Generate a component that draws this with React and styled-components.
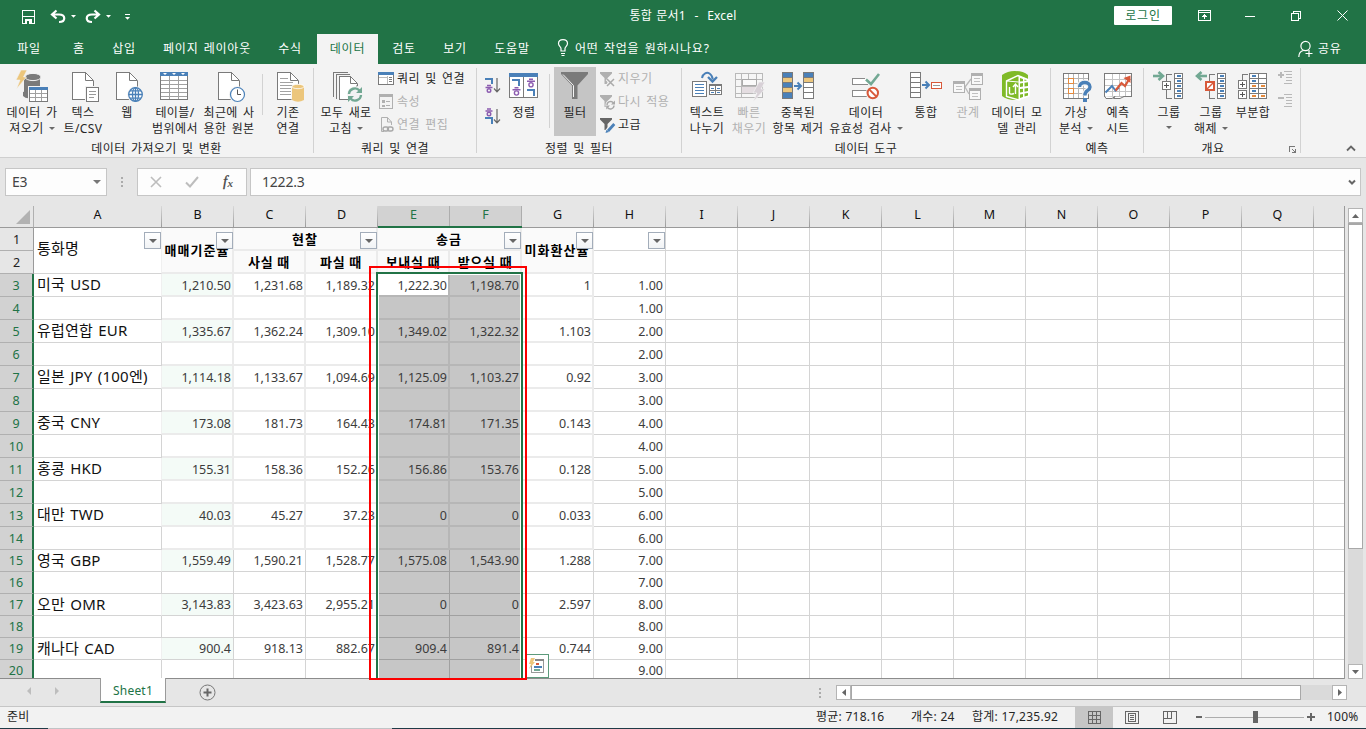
import React from 'react';
import styled, { createGlobalStyle } from 'styled-components';

const UI = '"Noto Sans", "Noto Sans CJK KR", sans-serif';
const GREEN = '#217346';
const GRAY = '#7a7a7a';
const BLUE = '#4a80b8';
const GOLD = '#ecc67c';
const TEAL = '#72a893';
const RED = '#d8593a';
const ORANGE = '#e58a3c';
const PALE = '#b9b9b9';

const Global = createGlobalStyle`
  body { margin: 0; background: #e6e6e6; }
  * { box-sizing: border-box; }
`;

const Window = styled.div`
  width: 1366px;
  height: 729px;
  overflow: hidden;
  display: flex;
  flex-direction: column;
  background: #e6e6e6;
  font-family: ${UI};
  font-size: 12px;
  color: #262626;
  white-space: nowrap;
  & svg { display: block; flex: none; }
`;

/* ---------- title bar ---------- */
const TitleBar = styled.header`
  height: 34px;
  display: grid;
  grid-template-columns: 400px 1fr 400px;
  background: ${GREEN};
  color: #fff;
`;
const QuickTools = styled.div`
  display: flex;
  align-items: flex-start;
  padding: 9px 0 0 21px;
`;
const DocTitle = styled.div`
  text-align: center;
  line-height: 31px;
  word-spacing: 1px;
  letter-spacing: 0.2px;
`;
const WindowTools = styled.div`
  display: flex;
  justify-content: flex-end;
  padding: 6px 1px 0 0;
`;
const LoginButton = styled.button`
  width: 58px;
  height: 19px;
  margin-right: 9px;
  padding: 0;
  border: 0;
  border-radius: 1px;
  background: #fff;
  color: ${GREEN};
  font: 12px/17px ${UI};
  letter-spacing: 0.8px;
`;
const WindowButton = styled.span`
  width: 46px;
  height: 19px;
  display: flex;
  align-items: center;
  justify-content: center;
`;

/* ---------- tabs ---------- */
const TabBar = styled.nav`
  height: 30px;
  display: flex;
  background: ${GREEN};
  color: #fff;
  letter-spacing: 0.75px;
  word-spacing: 1.5px;
  line-height: 29px;
`;
const Tab = styled.div`
  width: ${(p) => p.$w}px;
  margin-left: ${(p) => (p.$active ? 3 : 0)}px;
  text-align: center;
  background: ${(p) => (p.$active ? '#f3f3f3' : 'transparent')};
  color: ${(p) => (p.$active ? GREEN : '#fff')};
`;
const TellMe = styled.div`
  flex: 1;
  display: flex;
  gap: 6px;
  padding-left: 13px;
`;
const Share = styled.div`
  display: flex;
  gap: 5px;
  width: 68px;
`;

/* ---------- ribbon ---------- */
const Ribbon = styled.section`
  height: 94px;
  display: flex;
  background: #f3f3f3;
  border-bottom: 1px solid #cfcfcf;
  letter-spacing: 0.4px;
  word-spacing: 1.8px;
`;
const Group = styled.div`
  width: ${(p) => p.$w}px;
  display: flex;
  flex-direction: column;
`;
const GroupBody = styled.div`
  height: 76px;
  display: flex;
  padding-left: ${(p) => p.$pad || 0}px;
`;
const GroupLabel = styled.div`
  display: flex;
  height: 16px;
  line-height: 17px;
  & > span { flex: 1; text-align: center; }
`;
const Divider = styled.i`
  flex: none;
  width: 1px;
  height: ${(p) => p.$h || 85}px;
  margin: ${(p) => p.$m || '4px 0 0'};
  background: #d2d2d2;
`;
const BigButton = styled.div`
  flex: none;
  width: ${(p) => p.$w}px;
  height: 69px;
  margin-top: 3px;
  padding-top: 3px;
  display: flex;
  flex-direction: column;
  align-items: center;
  background: ${(p) => (p.$on ? '#c5c5c5' : 'transparent')};
  color: ${(p) => (p.$off ? '#b1b1b1' : '#262626')};
`;
const BigLabel = styled.span`
  display: flex;
  align-items: center;
  justify-content: center;
  gap: 5px;
  height: 16px;
  line-height: 16px;
  margin-top: ${(p) => (p.$first ? 1 : 0)}px;
  & i { margin-top: -2px; }
`;
const Caret = styled.i`
  width: 0;
  height: 0;
  border: ${(p) => p.$s || 3}px solid transparent;
  border-bottom: 0;
  border-top-color: ${(p) => p.$c || '#6a6a6a'};
`;
const SmallStack = styled.div`
  display: flex;
  flex-direction: column;
  padding: 3px 0 0 ${(p) => p.$l}px;
`;
const SmallButton = styled.div`
  display: flex;
  align-items: center;
  height: 23px;
  gap: ${(p) => p.$g}px;
  color: ${(p) => (p.$off ? '#b1b1b1' : '#262626')};
  & span { line-height: 22px; height: 22px; }
`;
const SortStack = styled.div`
  display: flex;
  flex-direction: column;
  width: 23px;
  gap: 14px;
  padding-top: 13px;
`;
const DetailStack = styled.div`
  display: flex;
  flex-direction: column;
  gap: 10px;
  padding: 7px 0 0 4px;
`;
const RibbonEnd = styled.div`
  flex: 1;
  display: flex;
  justify-content: flex-end;
  align-items: flex-end;
  padding: 0 10px 5px 0;
`;

/* ---------- formula bar ---------- */
const FormulaBar = styled.section`
  height: 48px;
  display: flex;
  padding: 10px 5px 0;
  color: #444;
  font-size: 14px;
  letter-spacing: -0.2px;
`;
const FieldBox = styled.div`
  width: ${(p) => (p.$w ? `${p.$w}px` : 'auto')};
  flex: ${(p) => (p.$w ? 'none' : 1)};
  height: 28px;
  display: flex;
  align-items: center;
  justify-content: space-between;
  margin-left: ${(p) => p.$ml || 0}px;
  padding: 0 ${(p) => p.$pr || 0}px 0 ${(p) => p.$pl || 0}px;
  border: 1px solid #c6c6c6;
  background: #fdfdfd;
  & > span { height: 27px; line-height: 25px; }
`;
const Dots = styled.span`
  width: ${(p) => p.$w}px;
  height: ${(p) => p.$h}px;
  display: flex;
  flex-direction: column;
  align-items: center;
  justify-content: center;
  gap: 2px;
  &::before, &::after { content: ''; }
  &::before, &::after, & i { width: 2px; height: 2px; background: #ababab; }
`;

/* ---------- sheet ---------- */
const SheetArea = styled.main`
  height: 473px;
  display: flex;
`;
const Sheet = styled.div`
  position: relative;
  width: 1345px;
  height: 473px;
  overflow: hidden;
  display: grid;
  grid-template-columns: 34px 128px repeat(16, 72px) 31px;
  grid-template-rows: 22px repeat(14, 23px) repeat(5, 22px) 18px 1px;
  border-right: 1px solid #9a9a9a;
  background: #fff;
`;
const Corner = styled.div`
  display: flex;
  align-items: flex-end;
  justify-content: flex-end;
  padding: 0 3px 3px 0;
  background: #e6e6e6;
  border-bottom: 1px solid #9a9a9a;
  border-right: 1px solid #b0b0b0;
`;
const CornerMark = styled.i`
  border-left: 14px solid transparent;
  border-bottom: 14px solid #b2b2b2;
`;
const ColHead = styled.div`
  text-align: center;
  padding-right: 1px;
  line-height: 18px;
  font-size: 12.5px;
  color: ${(p) => (p.$on ? GREEN : '#111')};
  background:
    linear-gradient(${(p) => (p.$on ? '#adadad, #adadad' : '#d8d8d8, #9c9c9c')}) right / 1px 100% no-repeat,
    ${(p) => (p.$on ? '#d2d2d2' : '#e6e6e6')};
  border-bottom: ${(p) => (p.$on ? `2px solid ${GREEN}` : '1px solid #9a9a9a')};
`;
const RowHead = styled.div`
  grid-column: 1;
  grid-row: ${(p) => p.$r + 1};
  text-align: center;
  line-height: ${(p) => (p.$r > 14 ? 22 : 24)}px;
  font-size: 12.5px;
  color: ${(p) => (p.$on ? GREEN : '#222')};
  background: ${(p) => (p.$on ? '#d2d2d2' : '#e6e6e6')};
  border-bottom: ${(p) => (p.$last ? 0 : 1)}px solid #b0b0b0;
  border-right: ${(p) => (p.$on ? `2px solid ${GREEN}` : '1px solid #9a9a9a')};
`;
const Cell = styled.div`
  position: relative;
  grid-row: ${(p) => p.$r + 1} / span ${(p) => p.$rs || 1};
  grid-column: ${(p) => p.$c + 1} / span ${(p) => p.$cs || 1};
  min-width: 0;
  border: 0 solid ${(p) => p.$line || '#d4d4d4'};
  border-right-width: ${(p) => p.$bw || 1}px;
  border-bottom-width: ${(p) => (p.$last ? 0 : p.$bw || 1)}px;
  background: ${(p) => p.$bg || '#fff'};
`;
const NameCell = styled(Cell)`
  padding-left: 3px;
  font-size: 15px;
  letter-spacing: 0.2px;
  word-spacing: 1.2px;
  color: #111;
  line-height: ${(p) => (p.$rs ? 41 : 20)}px;
  border-right-color: ${(p) => (p.$open ? '#f0f0f0' : '#d4d4d4')};
`;
const NumberCell = styled(Cell)`
  text-align: right;
  padding-right: ${(p) => 3 - (p.$bw || 1)}px;
  font-size: 12.5px;
  line-height: ${(p) => (p.$r > 14 ? 22 : 24)}px;
  color: #3c3c3c;
`;
const HeadCell = styled(Cell)`
  display: flex;
  justify-content: center;
  font-weight: 700;
  font-size: 13px;
  letter-spacing: ${(p) => (p.$low ? 0.7 : 1)}px;
  color: #000;
  line-height: ${(p) => (p.$rs ? 45 : p.$low ? 22 : 22)}px;
`;
const FilterButton = styled.span`
  position: absolute;
  z-index: 2;
  top: 4px;
  right: ${(p) => p.$right}px;
  width: 17px;
  height: 17px;
  display: flex;
  align-items: center;
  justify-content: center;
  border: 1px solid #a3adba;
  background: linear-gradient(#fff, #f1f3f5);
  & i { border: 4px solid transparent; border-bottom: 0; border-top-color: #666; }
`;
const BottomEdge = styled.div`
  position: relative;
  grid-row: 22;
  grid-column: 1 / -1;
  background: #8c8c8c;
`;
const Selection = styled.div`
  position: absolute;
  left: 376px;
  top: 66px;
  width: 147px;
  height: 420px;
  border: 2px solid ${GREEN};
  box-shadow: inset 0 0 0 1px #fff;
`;
const MarkerBox = styled.div`
  position: absolute;
  z-index: 5;
  left: 369px;
  top: 266px;
  width: 158px;
  height: 414px;
  border: 2px solid #fb0000;
`;
const QuickAnalysis = styled.div`
  position: absolute;
  z-index: 3;
  left: 526px;
  top: 448px;
  width: 23px;
  height: 24px;
  padding: 3px 0 0 1px;
  border: 1px solid #5c9a7b;
  background: #fff;
`;
const VScroll = styled.div`
  width: 15px;
  margin: 2px 0 0 3px;
  display: flex;
  flex-direction: column;
  background: #dadada;
`;
const ScrollButton = styled.span`
  flex: none;
  width: 15px;
  height: 15px;
  display: flex;
  align-items: center;
  justify-content: center;
  border: 1px solid #b4b4b4;
  background: #fff;
`;
const VThumb = styled.i`
  height: 326px;
  border: 1px solid #a8a8a8;
  border-top-width: 2px;
  background: #fff;
  margin-bottom: 115px;
`;

/* ---------- sheet tabs ---------- */
const SheetBar = styled.footer`
  height: 27px;
  display: flex;
`;
const SheetNav = styled.div`
  width: 100px;
  display: flex;
  gap: 23px;
  padding: 8px 0 0 26px;
`;
const SheetTab = styled.div`
  position: relative;
  width: 66px;
  height: 25px;
  margin-top: -1px;
  border: 1px solid #9a9a9a;
  border-top: 0;
  border-bottom: 2px solid ${GREEN};
  background: #fff;
  color: ${GREEN};
  text-align: center;
  line-height: 25px;
  letter-spacing: 0.2px;
`;
const AddSheet = styled.div`
  flex: 1;
  padding: 5px 0 0 33px;
`;
const HScroll = styled.div`
  display: flex;
  width: 511px;
  height: 15px;
  margin: 6px 19px 0 0;
  background: #dadada;
`;
const HThumb = styled.i`
  width: 450px;
  margin-right: 31px;
  border: 1px solid #a8a8a8;
  background: #fff;
`;

/* ---------- status bar ---------- */
const StatusBar = styled.footer`
  height: 22px;
  display: flex;
  border-top: 1px solid #c6c6c6;
  background: #f2f2f2;
  line-height: 20px;
  letter-spacing: 0.25px;
`;
const Ready = styled.div`
  flex: 1;
  padding-left: 7px;
`;
const Stat = styled.span`
  width: ${(p) => p.$w}px;
`;
const ViewButton = styled.span`
  width: 38px;
  display: flex;
  align-items: center;
  justify-content: center;
  background: ${(p) => (p.$on ? '#c6c6c6' : 'transparent')};
`;
const ZoomControl = styled.div`
  width: 138px;
  padding-left: 4px;
`;
const ZoomText = styled.span`
  width: 39px;
`;
const TaskEdge = styled.div`
  height: 1px;
  background: linear-gradient(90deg, #1f3b47 48px, #c0c4c6 48px 392px, #1f3b47 392px);
`;

/* ---------- icons ---------- */
const Svg = ({ w = 34, h = 34, children, smooth }) => (
  <svg width={w} height={h} viewBox={`0 0 ${w} ${h}`} fill="none" shapeRendering={smooth ? 'auto' : 'crispEdges'}>{children}</svg>
);
const Smooth = ({ children, ...p }) => <g shapeRendering="auto" {...p}>{children}</g>;

const Doc = () => (
  <>
    <path d="M6.5 2.5H20.5L27.5 10.5V29.5H6.5Z" fill="#fff" />
    <path d="M19.5 2.5H6.5V29.5H27.5V10.5" stroke={GRAY} />
    <Smooth><path d="M19.5 2.5V10.5H27.5L19.5 2.5Z" fill="#fff" stroke={GRAY} /></Smooth>
  </>
);

const icons = {
  getData: (
    <Svg>
      <rect x="9" y="7" width="16" height="19" fill={GRAY} />
      <Smooth>
        <ellipse cx="18" cy="7" rx="8" ry="3.6" fill={GRAY} stroke="#f3f3f3" strokeWidth="1" />
        <path d="M8 22V26Q11 29 15 28V20Z" fill={GRAY} />
        <path d="M6 0H12L8.5 7H11.5L1.5 19L5 10H1Z" fill={GOLD} stroke="#f3f3f3" strokeWidth=".6" />
      </Smooth>
      <rect x="13" y="16" width="21" height="17" fill="#f3f3f3" />
      <rect x="14.5" y="18.5" width="18" height="13" fill="#fff" stroke={GRAY} />
      <rect x="14" y="17" width="19" height="3" fill={BLUE} />
      <path d="M20.5 20V31M26.5 20V31M15 23.5H32M15 27.5H32" stroke="#a0a0a0" />
    </Svg>
  ),
  textCsv: (
    <Svg>
      <Doc />
      <rect x="19" y="16" width="15" height="17" fill="#f3f3f3" />
      <rect x="20.5" y="17.5" width="12" height="14" fill="#fff" stroke={GRAY} />
      <path d="M23 21.5H30M23 24.5H30M23 27.5H28" stroke="#999" />
    </Svg>
  ),
  web: (
    <Svg>
      <Doc />
      <Smooth stroke={BLUE} strokeWidth="1.3">
        <circle cx="25.5" cy="24.5" r="8.3" fill="#f3f3f3" stroke="none" />
        <circle cx="25.5" cy="24.5" r="6.8" fill="#fff" />
        <ellipse cx="25.5" cy="24.5" rx="3" ry="6.8" />
        <path d="M18.7 24.5H32.3M20 20.8H31M20 28.2H31M25.5 17.7V31.3" />
      </Smooth>
    </Svg>
  ),
  table: (
    <Svg>
      <rect x="2.5" y="3.5" width="27" height="26" fill="#fff" stroke={GRAY} />
      <rect x="2" y="2" width="28" height="4" fill={BLUE} />
      <path d="M11.5 6V29M20.5 6V29M3 10.5H29M3 14.5H29M3 18.5H29M3 22.5H29M3 26.5H29" stroke="#a0a0a0" />
      <Smooth fill="#fff"><path d="M5 3H9L7 5ZM14 3H18L16 5ZM23 3H27L25 5Z" /></Smooth>
    </Svg>
  ),
  recent: (
    <Svg>
      <Doc />
      <Smooth>
        <circle cx="25.5" cy="24.5" r="8.6" fill="#f3f3f3" />
        <circle cx="25.5" cy="24.5" r="7" fill="#fff" stroke={BLUE} strokeWidth="1.2" />
        <path d="M25.5 19.5V24.5H29" stroke="#555" />
      </Smooth>
    </Svg>
  ),
  existing: (
    <Svg>
      <Doc />
      <path d="M9 8.5H17M9 12.5H22M9 15.5H22M9 18.5H20M9 21.5H20M9 24.5H20" stroke="#a2a2a2" />
      <Smooth>
        <path d="M20.5 16V30Q27 34 33.5 30V16Q27 12 20.5 16Z" fill="#f3f3f3" />
        <path d="M21 17V30Q27 33.5 33 30V17Z" fill={GOLD} />
        <ellipse cx="27" cy="16.5" rx="6" ry="2.2" fill={GOLD} stroke="#fff" strokeWidth=".8" />
      </Smooth>
    </Svg>
  ),
  refreshAll: (
    <Svg>
      <path d="M4.5 27V2.5H19M7.5 29V4.5H21" stroke={GRAY} />
      <path d="M10.5 6.5H22L28.5 13.5V29.5H10.5Z" fill="#fff" />
      <path d="M21.5 6.5H10.5V29.5H28" stroke={GRAY} />
      <Smooth><path d="M21.5 6.5L28.5 13.5V16H27M21.5 6.5V13.5H28" stroke={GRAY} /></Smooth>
      <Smooth>
        <circle cx="26" cy="24.5" r="8" fill="#f3f3f3" />
        <path d="M20 24A6 6 0 0 1 30.5 20.5M32 25A6 6 0 0 1 21.5 28.5" stroke={TEAL} strokeWidth="2.4" />
        <path d="M33 17V23H27ZM19 32V26H25Z" fill={TEAL} />
      </Smooth>
    </Svg>
  ),
  sort: (
    <Svg>
      <rect x="2.5" y="4.5" width="28" height="23" fill="#fff" stroke={GRAY} />
      <rect x="2" y="3" width="29" height="4" fill={BLUE} />
      <path d="M16.5 7V28" stroke={GRAY} />
      <path d="M5 10H13M12 10V16M20 20H28M27 20V26" stroke={BLUE} strokeWidth="2" />
      <Smooth stroke="#8c5cb0" strokeWidth="1.4">
        <path d="M7.5 17.7H11.5M5.5 19.7H13.5" /><circle cx="9.5" cy="23" r="2.1" />
        <path d="M22 9.300H26M20 11.300H28" /><circle cx="24" cy="14.800" r="2.100" />
      </Smooth>
    </Svg>
  ),
  filter: (
    <Svg>
      <Smooth>
        <path d="M3 2H30V4L19.5 15.5V29H14V15.5L3 4Z" fill={GRAY} />
        <path d="M5 4.5L15.5 15.5V27" stroke="#f4f4f4" strokeWidth="1" />
      </Smooth>
    </Svg>
  ),
  textSplit: (
    <Svg>
      <rect x="2.5" y="11.5" width="14" height="15" fill="#fff" stroke={GRAY} />
      <path d="M5 14.5H14M5 17.5H14M5 20.5H14M5 23.5H14" stroke={BLUE} />
      <rect x="19.5" y="14.5" width="12" height="10" fill="#fff" stroke={GRAY} />
      <path d="M19 15.5H32M25.5 14V25M20 20.5H31" stroke={GRAY} />
      <path d="M21 18.5H24M27 18.5H30M21 22.5H24M27 22.5H30" stroke={BLUE} />
      <Smooth>
        <path d="M12 8C13 3 17 2 19.5 3.5C22 5 22.5 7 22.8 9.5" stroke={BLUE} strokeWidth="2" />
        <path d="M18 7L22.5 11.5L27 7" stroke={BLUE} strokeWidth="2.3" />
      </Smooth>
    </Svg>
  ),
  flashFill: (
    <Svg>
      <rect x="3.5" y="3.5" width="27" height="24" fill="#f6f6f6" stroke={PALE} />
      <rect x="10" y="17" width="14" height="7" fill="#e4dde1" />
      <path d="M4 9.5H30M4 16.5H30M4 23.5H24M9.5 4V27M16.5 4V9M24.5 4V16" stroke={PALE} />
      <rect x="10.5" y="9.5" width="14" height="6" fill="#fafafa" stroke="#aaa" />
      <Smooth><path d="M27 12H33L29 19H33L21 32L25 23H21Z" fill="#d8d1d7" stroke="#f3f3f3" strokeWidth=".7" /></Smooth>
    </Svg>
  ),
  dedupe: (
    <Svg>
      <rect x="1.5" y="2.5" width="10" height="26" fill={BLUE} />
      <path d="M2 8H11V13H2ZM2 18H11V23H2Z" fill={GOLD} />
      <path d="M1.5 2.5H11.5V28.5H1.5ZM2 7.5H11M2 12.5H11M2 17.5H11M2 22.5H11" stroke={GRAY} />
      <rect x="22.5" y="2.5" width="10" height="26" fill="#fff" />
      <path d="M23 3H32V8H23Z" fill={BLUE} />
      <path d="M23 8H32V13H23Z" fill={GOLD} />
      <path d="M22.5 2.5H32.5V28.5H22.5ZM23 7.5H32M23 12.5H32M23 17.5H32M23 22.5H32" stroke={GRAY} />
      <Smooth><path d="M13 16H19" stroke={BLUE} strokeWidth="2" /><path d="M16.5 12.5L20 16L16.5 19.5" stroke={BLUE} strokeWidth="2" /></Smooth>
    </Svg>
  ),
  validate: (
    <Svg>
      <path d="M16 8.5H3.5V14.5H19M18 20.5H3.5V26.5H18" fill="#fff" stroke="#8a8a8a" />
      <Smooth>
        <path d="M17 9.5L22 14L30 4" stroke={TEAL} strokeWidth="2.6" />
        <circle cx="23.8" cy="23" r="7" fill="#f3f3f3" />
        <circle cx="23.8" cy="23" r="5.2" fill="#fff" stroke={RED} strokeWidth="2" />
        <path d="M20.2 19.4L27.4 26.6" stroke={RED} strokeWidth="2" />
      </Smooth>
    </Svg>
  ),
  consolidate: (
    <Svg>
      <rect x="1.5" y="2.5" width="10" height="25" fill="#fff" stroke={GRAY} />
      <path d="M2 7.5H11M2 12.5H11M2 17.5H11M2 22.5H11" stroke={GRAY} />
      <Smooth><path d="M13 15H19" stroke={BLUE} strokeWidth="2" /><path d="M16.5 11.5L20 15L16.5 18.5" stroke={BLUE} strokeWidth="2" /></Smooth>
      <rect x="22.5" y="12.5" width="10" height="6" fill="#fff" stroke={RED} />
      <path d="M24 15.5H31" stroke="#999" />
    </Svg>
  ),
  relations: (
    <Svg>
      <Smooth><path d="M14 17L20 9M14 17L18 24" stroke={PALE} strokeWidth="1.3" /></Smooth>
      {[[2, 11], [20, 3], [18, 18]].map(([x, y]) => (
        <g key={x}>
          <rect x={x + 0.5} y={y + 0.5} width="11" height="11" fill="#f8f8f8" stroke="#b0b0b0" />
          <rect x={x} y={y} width="12" height="3" fill="#b0b0b0" />
          <path d={`M${x + 3} ${y + 5.5}H${x + 9}M${x + 3} ${y + 8.5}H${x + 9}`} stroke="#c0c0c0" />
        </g>
      ))}
    </Svg>
  ),
  model: (
    <Svg smooth>
      <path d="M2 5Q8 0.8 15 1Q23 1 28 5V26Q22 30.5 15 30Q7 30 2 26Z" fill="#7fba27" />
      <path d="M6.5 11L18 5.5L29 10V26L19 30L6.5 26.5Z" fill="#7fba27" stroke="#fff" strokeWidth="1.4" />
      <path d="M18.5 5.5V30L29.5 26V10Z" fill="#fff" />
      <path d="M7 11L18.5 12L29 10.5" stroke="#fff" />
      <path d="M20 13.5L23 13V16.5L20 17ZM24.5 12.7L28 12.2V16L24.5 16.4ZM20 19L23 18.7V22L20 22.5ZM24.5 18.4L28 18V21L24.5 21.7ZM20 24.5L23 24V27L20 28ZM24.5 23.5L28 23V25.5L24.5 26.6ZM20 8L23 9V11.3L20 11.6ZM24.5 9.4L27 10.2L24.5 10.9Z" fill="#7fba27" />
      <path d="M9.5 17V23Q10 25 14 23.5M15.5 24V16L15 14M13 17L15.5 14L18 17" stroke="#fff" strokeWidth="1.4" />
    </Svg>
  ),
  whatIf: (
    <Svg>
      <rect x="4.5" y="3.5" width="25" height="25" fill="#fff" stroke={GRAY} />
      <path d="M9.5 4V28M14.5 4V28M19.5 4V28M24.5 4V28M5 8.5H29M5 13.5H29M5 18.5H29M5 23.5H29" stroke="#b5b5b5" />
      <path d="M9.5 8.5H14.5V13.5H9.5ZM9.5 18.5H14.5V23.5H9.5Z" fill="#fff" stroke={ORANGE} strokeWidth="1.4" />
      <Smooth>
        <path d="M20.5 17C20.5 11 31 11 31 17C31 21 25.8 20 25.8 26" stroke="#f3f3f3" strokeWidth="6" />
        <path d="M20.5 17C20.5 11 31 11 31 17C31 21 25.8 20 25.8 25.5" stroke={BLUE} strokeWidth="3.4" />
        <rect x="24" y="28" width="4" height="4" fill={BLUE} />
      </Smooth>
    </Svg>
  ),
  forecast: (
    <Svg>
      <rect x="3.5" y="3.5" width="27" height="23" fill="#fff" stroke={GRAY} />
      <path d="M4 9.5H30M4 15.5H30M4 21.5H30M11.5 4V26M18.5 4V26M24.5 4V26" stroke="#c4c4c4" />
      <Smooth>
        <path d="M3.5 26L5 28.5H11L14 26.5M14 26.5L12.5 28.5H19L23 26.5" fill="#fff" stroke={GRAY} />
        <path d="M4.5 22.5L11 16L14.5 20.5L18 17.5" stroke={BLUE} strokeWidth="2" />
        <path d="M14.5 20.5L20.5 13L24 16L28.5 8.5" stroke={RED} strokeWidth="2.2" />
        <path d="M22.5 8L29.500 5.500V13Z" fill={RED} />
      </Smooth>
    </Svg>
  ),
  group: (
    <Svg>
      <Smooth><path d="M1 6H10" stroke={TEAL} strokeWidth="2.6" /><path d="M6.5 2L11 6L6.5 10" stroke={TEAL} strokeWidth="2.6" /></Smooth>
      <path d="M14.5 11V4.5H20M14.5 20V28.5H20" stroke={GRAY} />
      <rect x="10.5" y="11.5" width="8" height="8" fill="#fff" stroke={GRAY} />
      <path d="M12 15.5H17M14.5 13V18" stroke="#555" />
      <rect x="22.5" y="3.5" width="8" height="25" fill="#fff" stroke={GRAY} />
      <path d="M23 8.5H30M23 13.5H30M23 18.5H30M23 23.5H30" stroke={GRAY} />
      <path d="M25 6H29M25 11H29M25 16H29M25 21H29M25 26H29" stroke={BLUE} strokeWidth="1.4" />
    </Svg>
  ),
  ungroup: (
    <Svg>
      <Smooth><path d="M4 6H13" stroke={TEAL} strokeWidth="2.6" /><path d="M7.5 2L3 6L7.5 10" stroke={TEAL} strokeWidth="2.6" /></Smooth>
      <path d="M15.5 11V4.5H21M15.5 20V28.5H21" stroke={GRAY} />
      <rect x="12" y="12" width="8" height="8" fill="#fff" stroke={RED} strokeWidth="1.6" />
      <Smooth><path d="M12.5 19.5L19.5 12.5" stroke={RED} strokeWidth="1.4" /></Smooth>
      <rect x="23.5" y="3.5" width="8" height="25" fill="#fff" stroke={GRAY} />
      <path d="M24 8.5H31M24 13.5H31M24 18.5H31M24 23.5H31" stroke={GRAY} />
      <path d="M26 6H30M26 11H30M26 16H30M26 21H30M26 26H30" stroke={BLUE} strokeWidth="1.4" />
    </Svg>
  ),
  subtotal: (
    <Svg>
      <path d="M6.5 10V4.5H12" stroke={GRAY} />
      <rect x="2.5" y="10.5" width="8" height="8" fill="#fff" stroke={GRAY} />
      <rect x="2.5" y="20.5" width="8" height="8" fill="#fff" stroke={GRAY} />
      <path d="M4 14.5H9M6.5 12V17M4 24.5H9M6.5 22V27" stroke="#555" />
      <rect x="13.5" y="3.5" width="17" height="25" fill="#fff" stroke={GRAY} />
      <path d="M14 8.5H30M14 13.5H30M14 18.5H30M14 23.5H30M22.5 4V28" stroke={GRAY} />
      <path d="M16 6H20M16 11H20M16 21H20" stroke={BLUE} strokeWidth="1.4" />
      <path d="M16 16H20M25 16H29M16 26H20M25 26H29" stroke={ORANGE} strokeWidth="1.4" />
    </Svg>
  ),
};

const SortMini = ({ desc }) => (
  <Svg w={16} h={17}>
    <path d={desc ? 'M0 10H8M7 10V16' : 'M0 2H8M7 2V7'} stroke={BLUE} strokeWidth="2" />
    <Smooth stroke="#8c5cb0" strokeWidth="1.400" transform={desc ? 'translate(0 0)' : 'translate(0 7.500)'}>
      <path d="M2 1H6M0.500 3H7.500" /><circle cx="4" cy="6" r="1.800" />
    </Smooth>
    <Smooth stroke="#666" strokeWidth="1.200"><path d="M12 1V15M9 11.500L12 14.800L15 11.500" /></Smooth>
  </Svg>
);

const small = {
  queries: (
    <Svg w={16} h={16}>
      <rect x=".5" y="1.5" width="15" height="12" fill="#fff" stroke={GRAY} />
      <rect x="0" y="1" width="16" height="3" fill={BLUE} />
      <path d="M9.5 5V13M1 6.5H9" stroke="#bbb" /><path d="M11 6.5H14M11 8.5H14M11 10.5H14" stroke={GRAY} />
    </Svg>
  ),
  props: (
    <Svg w={16} h={16}>
      <path d="M1.500 .5H14.500V14.500H1.500Z" stroke="#b0b0b0" /><path d="M1 1.500H15" stroke="#b0b0b0" strokeWidth="3" />
      <path d="M4 6H6.500V8.500H4ZM4 10.500H6.500V13H4Z" fill="#b0b0b0" /><path d="M8 7.500H12M8 11.500H12" stroke="#b0b0b0" />
    </Svg>
  ),
  edit: (
    <Svg w={16} h={16} smooth>
      <path d="M6 14.500H3.500V.5H9.500L13.500 5V8M9.500 .5V5H13.500" stroke="#b0b0b0" />
      <rect x="5" y="10" width="5.500" height="4" rx="2" stroke="#a8a8a8" strokeWidth="1.400" />
      <rect x="9.500" y="10" width="5.500" height="4" rx="2" stroke="#a8a8a8" strokeWidth="1.400" />
    </Svg>
  ),
  clear: (
    <Svg w={16} h={16} smooth>
      <path d="M0 1H12V2.5L7.5 7V13H4.5V7L0 2.5Z" fill="#b0b0b0" />
      <path d="M7 8L14 15M14 8L7 15" stroke="#f3f3f3" strokeWidth="3.5" /><path d="M7 8L14 15M14 8L7 15" stroke="#aaa" strokeWidth="1.5" />
    </Svg>
  ),
  reapply: (
    <Svg w={16} h={16} smooth>
      <path d="M0 1H12V2.5L7.5 7V13H4.5V7L0 2.5Z" fill="#b0b0b0" />
      <circle cx="10.5" cy="11" r="5" fill="#f3f3f3" />
      <path d="M7 11A3.6 3.6 0 0 1 13.5 9M14 11.5A3.6 3.6 0 0 1 7.5 13.5" stroke="#a8a8a8" strokeWidth="1.4" />
      <path d="M15 6.5V10.5H11ZM6.2 15.5V11.5H10Z" fill="#a8a8a8" />
    </Svg>
  ),
  advanced: (
    <Svg w={16} h={16} smooth>
      <path d="M0 1H12V2.5L7.5 7V13H4.5V7L0 2.5Z" fill="#666" />
      <path d="M7 15L14 7" stroke="#f3f3f3" strokeWidth="5" />
      <path d="M8 14L14.3 7" stroke={BLUE} strokeWidth="2.8" /><path d="M5.5 16L6.5 12.8L9 15Z" fill={BLUE} />
    </Svg>
  ),
};

const Big = ({ w, icon, lines, off, on, menu }) => (
  <BigButton $w={w} $off={off} $on={on}>
    {icons[icon]}
    {lines.map((t, i) => (
      <BigLabel key={i} $first={i === 0}>
        {t}
        {menu && i === lines.length - 1 && <Caret />}
      </BigLabel>
    ))}
  </BigButton>
);

const SmallItem = ({ icon, text, off, gap }) => (
  <SmallButton $off={off} $g={gap}>{small[icon]}<span>{text}</span></SmallButton>
);

/* ---------- data ---------- */
const tabs = [['파일', 58], ['홈', 42], ['삽입', 48], ['페이지 레이아웃', 118], ['수식', 48], ['데이터', 61, true], ['검토', 52], ['보기', 50], ['도움말', 64]];
const letters = 'ABCDEFGHIJKLMNOPQ'.split('');
const rates = {
  3: ['미국 USD', '1,210.50', '1,231.68', '1,189.32', '1,222.30', '1,198.70', '1'],
  5: ['유럽연합 EUR', '1,335.67', '1,362.24', '1,309.10', '1,349.02', '1,322.32', '1.103'],
  7: ['일본 JPY (100엔)', '1,114.18', '1,133.67', '1,094.69', '1,125.09', '1,103.27', '0.92'],
  9: ['중국 CNY', '173.08', '181.73', '164.43', '174.81', '171.35', '0.143'],
  11: ['홍콩 HKD', '155.31', '158.36', '152.26', '156.86', '153.76', '0.128'],
  13: ['대만 TWD', '40.03', '45.27', '37.23', '0', '0', '0.033'],
  15: ['영국 GBP', '1,559.49', '1,590.21', '1,528.77', '1,575.08', '1,543.90', '1.288'],
  17: ['오만 OMR', '3,143.83', '3,423.63', '2,955.21', '0', '0', '2.597'],
  19: ['캐나다 CAD', '900.4', '918.13', '882.67', '909.4', '891.4', '0.744'],
};
const rows = Array.from({ length: 20 }, (_, i) => i + 1);
const LIGHT = '#ebebeb';

const Filter = ({ right = 0 }) => <FilterButton $right={right}><i /></FilterButton>;

function DataRow({ r }) {
  const data = rates[r] || [];
  const last = r === 20;
  const thick = r <= 14;
  return (
    <>
      <NameCell $r={r} $c={1} $last={last} $open={r % 2 === 1}>{data[0]}</NameCell>
      {[2, 3, 4, 5, 6, 7].map((c) => {
        const sel = c === 5 || c === 6;
        const active = r === 3 && c === 5;
        const bg = active ? '#fff' : sel ? '#c6c6c6' : c === 2 && r % 2 === 1 ? '#f4fbf7' : '#fff';
        const line = sel ? (thick ? '#b6b6b6' : '#a0a0a0') : thick ? LIGHT : '#d4d4d4';
        return (
          <NumberCell key={c} $r={r} $c={c} $bw={thick ? 2 : 1} $line={line} $bg={bg} $last={last}>
            {data[c - 1]}
          </NumberCell>
        );
      })}
      <NumberCell $r={r} $c={8} $last={last}>{`${Math.floor((r - 1) / 2)}.00`}</NumberCell>
    </>
  );
}

function App() {
  return (
    <>
      <Global />
      <Window>
        <TitleBar>
          <QuickTools>
            <Svg w={120} h={16}>
              <path d="M1.5 1.5H13.5V14.5H1.5Z" stroke="#fff" strokeWidth="1.6" />
              <path d="M2 7.5H13" stroke="#fff" strokeWidth="1.6" />
              <path d="M4 10H11V15H4Z" fill="#fff" /><rect x="6" y="12" width="2" height="3" fill={GREEN} />
              <Smooth stroke="#fff" strokeWidth="2.2">
                <path d="M35.5 1.5L31 5.5L35.5 9.5M31 5.5H38C45 5.5 45 13 38 13" />
                <path d="M73.5 1.5L78 5.5L73.5 9.5M78 5.5H71C64 5.5 64 13 71 13" />
              </Smooth>
              <Smooth fill="#fff"><path d="M50 6H55L52.5 8.8ZM85 6H90L87.5 8.8ZM104 8H109L106.5 10.8Z" /></Smooth>
              <path d="M104 5.5H109" stroke="#fff" />
            </Svg>
          </QuickTools>
          <DocTitle>{'통합 문서1 \u00a0- \u00a0Excel'}</DocTitle>
          <WindowTools>
            <LoginButton>로그인</LoginButton>
            <WindowButton>
              <Svg w={13} h={11}><path d="M.5 .5H12.5V10.5H.5ZM0 2.5H13M6.5 4V9M4 6.5H9M5 5.5H8" stroke="#fff" /></Svg>
            </WindowButton>
            <WindowButton><Svg w={10} h={10}><path d="M0 5.5H10" stroke="#fff" /></Svg></WindowButton>
            <WindowButton><Svg w={10} h={10}><path d="M.5 2.5H7.5V9.5H.5ZM2.5 2V.5H9.5V7.5H8" stroke="#fff" /></Svg></WindowButton>
            <WindowButton><Svg w={11} h={11} smooth><path d="M.5 .5L10.5 10.5M10.5 .5L.5 10.5" stroke="#fff" /></Svg></WindowButton>
          </WindowTools>
        </TitleBar>

        <TabBar>
          {tabs.map(([t, w, on]) => <Tab key={t} $w={w} $active={on}>{t}</Tab>)}
          <TellMe>
            <Svg w={12} h={24} smooth>
              <path d="M4 17V14.5C4 13 1.500 12 1.500 9.500C1.500 4.200 10.500 4.200 10.500 9.500C10.500 12 8 13 8 14.500V17ZM4 19.500H8M4.500 21.500H7.500" stroke="#fff" strokeWidth="1.200" />
            </Svg>
            어떤 작업을 원하시나요?
          </TellMe>
          <Share>
            <Svg w={15} h={24} smooth>
              <path d="M.8 23C.8 19 3 17 5.500 16.500" stroke="#fff" strokeWidth="1.200" />
              <circle cx="7.500" cy="12" r="4.600" stroke="#fff" strokeWidth="1.200" />
              <path d="M7.500 19.500H14.500M11 16V23" stroke="#fff" strokeWidth="1.200" />
            </Svg>
            공유
          </Share>
        </TabBar>

        <Ribbon>
          <Group $w={313}>
            <GroupBody $pad={2}>
              <Big w={60} icon="getData" lines={['데이터 가', '져오기']} menu />
              <Big w={42} icon="textCsv" lines={['텍스', '트/CSV']} />
              <Big w={46} icon="web" lines={['웹']} />
              <Big w={50} icon="table" lines={['테이블/', '범위에서']} />
              <Big w={58} icon="recent" lines={['최근에 사', '용한 원본']} />
              <Divider $h={41} $m="10px 1px 0 4px" />
              <Big w={48} icon="existing" lines={['기존', '연결']} />
            </GroupBody>
            <GroupLabel><span>데이터 가져오기 및 변환</span></GroupLabel>
          </Group>
          <Divider />
          <Group $w={162}>
            <GroupBody $pad={2}>
              <Big w={60} icon="refreshAll" lines={['모두 새로', '고침']} menu />
              <SmallStack $l={2}>
                <SmallItem icon="queries" text="쿼리 및 연결" gap={3} />
                <SmallItem icon="props" text="속성" off gap={3} />
                <SmallItem icon="edit" text="연결 편집" off gap={3} />
              </SmallStack>
            </GroupBody>
            <GroupLabel><span>쿼리 및 연결</span></GroupLabel>
          </Group>
          <Divider />
          <Group $w={204}>
            <GroupBody $pad={8}>
              <SortStack><SortMini /><SortMini desc /></SortStack>
              <Big w={32} icon="sort" lines={['정렬']} />
              <Divider $h={54} $m="10px 4px 0 9px" />
              <Big w={42} icon="filter" lines={['필터']} on />
              <SmallStack $l={4}>
                <SmallItem icon="clear" text="지우기" off gap={2} />
                <SmallItem icon="reapply" text="다시 적용" off gap={2} />
                <SmallItem icon="advanced" text="고급" gap={2} />
              </SmallStack>
            </GroupBody>
            <GroupLabel><span>정렬 및 필터</span></GroupLabel>
          </Group>
          <Divider />
          <Group $w={368}>
            <GroupBody $pad={4}>
              <Big w={42} icon="textSplit" lines={['텍스트', '나누기']} />
              <Big w={42} icon="flashFill" lines={['빠른', '채우기']} off />
              <Big w={56} icon="dedupe" lines={['중복된', '항목 제거']} />
              <Big w={80} icon="validate" lines={['데이터', '유효성 검사']} menu />
              <Big w={40} icon="consolidate" lines={['통합']} />
              <Big w={44} icon="relations" lines={['관계']} off />
              <Big w={54} icon="model" lines={['데이터 모', '델 관리']} />
            </GroupBody>
            <GroupLabel><span>데이터 도구</span></GroupLabel>
          </Group>
          <Divider />
          <Group $w={92}>
            <GroupBody $pad={4}>
              <Big w={42} icon="whatIf" lines={['가상', '분석']} menu />
              <Big w={42} icon="forecast" lines={['예측', '시트']} />
            </GroupBody>
            <GroupLabel><span>예측</span></GroupLabel>
          </Group>
          <Divider />
          <Group $w={156}>
            <GroupBody $pad={4}>
              <Big w={42} icon="group" lines={['그룹', '']} menu />
              <Big w={42} icon="ungroup" lines={['그룹', '해제']} menu />
              <Big w={42} icon="subtotal" lines={['부분합']} />
              <DetailStack>
                <Svg w={14} h={13}><path d="M6 .5H14M8 3.5H14M8 6.5H14M8 9.5H14M6 12.5H14" stroke={PALE} /><path d="M0 4H6M3 1V7" stroke={PALE} strokeWidth="2" /></Svg>
                <Svg w={14} h={13}><path d="M6 .5H14M8 3.5H14M8 6.5H14M8 9.5H14M6 12.5H14" stroke={PALE} /><path d="M0 4H6" stroke={PALE} strokeWidth="2" /></Svg>
              </DetailStack>
            </GroupBody>
            <GroupLabel>
              <span>개요</span>
              <Svg w={18} h={16}><path d="M7.5 12V6.5H13M10 9L13 12M13.5 9V12.5H10" stroke="#777" /></Svg>
            </GroupLabel>
          </Group>
          <Divider />
          <RibbonEnd><Svg w={10} h={7} smooth><path d="M1 5.500L5 1.500L9 5.500" stroke="#666" strokeWidth="1.800" /></Svg></RibbonEnd>
        </Ribbon>

        <FormulaBar>
          <FieldBox $w={102} $pl={6} $pr={5}><span>E3</span><Caret $s={4} $c="#777" /></FieldBox>
          <Dots $w={30} $h={28}><i /></Dots>
          <FieldBox $w={110} $pl={12} $pr={11}>
            <Svg w={12} h={12} smooth><path d="M1 1L11 11M11 1L1 11" stroke="#bdbdbd" strokeWidth="1.600" /></Svg>
            <Svg w={14} h={12} smooth><path d="M1 6.500L5 10.500L13 1" stroke="#bdbdbd" strokeWidth="2" /></Svg>
            <Svg w={14} h={16} smooth>
              <text x="2" y="12" fontFamily="Liberation Serif, serif" fontStyle="italic" fontSize="15" fill="#444" stroke="#444" strokeWidth=".3">f</text>
              <text x="6.5" y="13" fontFamily="Liberation Serif, serif" fontStyle="italic" fontWeight="700" fontSize="11" fill="#555">x</text>
            </Svg>
          </FieldBox>
          <FieldBox $ml={3} $pl={11} $pr={4}>
            <span>1222.3</span>
            <Svg w={8} h={7} smooth><path d="M1 1.500L4 4.500L7 1.500" stroke="#666" strokeWidth="2" /></Svg>
          </FieldBox>
        </FormulaBar>

        <SheetArea>
          <Sheet>
            <Corner><CornerMark /></Corner>
            {letters.map((l) => <ColHead key={l} $on={l === 'E' || l === 'F'}>{l}</ColHead>)}
            <ColHead />
            {rows.map((r) => <RowHead key={r} $r={r} $on={r > 2} $last={r === 20}>{r}</RowHead>)}

            <NameCell $r={1} $c={1} $rs={2} $open>통화명<Filter /></NameCell>
            <HeadCell $r={1} $c={2} $rs={2} $bw={2} $line={LIGHT} $bg="#fafafa">매매기준율<Filter right={-1} /></HeadCell>
            <HeadCell $r={1} $c={3} $cs={2} $bw={2} $line={LIGHT} $bg="#fafafa">현찰<Filter right={-1} /></HeadCell>
            <HeadCell $r={1} $c={5} $cs={2} $bw={2} $line={LIGHT} $bg="#fafafa">송금<Filter right={-1} /></HeadCell>
            <HeadCell $r={1} $c={7} $rs={2} $bw={2} $line={LIGHT} $bg="#fafafa">미화환산율<Filter right={-1} /></HeadCell>
            {['사실 때', '파실 때', '보내실 때', '받으실 때'].map((t, i) => (
              <HeadCell key={t} $r={2} $c={3 + i} $bw={2} $line={LIGHT} $bg="#fafafa" $low>{t}</HeadCell>
            ))}
            <Cell $r={1} $c={8}><Filter /></Cell>
            <Cell $r={2} $c={8} />
            {rows.slice(2).map((r) => <DataRow key={r} r={r} />)}
            {rows.map((r) => Array.from({ length: 10 }, (_, i) => <Cell key={`${r}-${i}`} $r={r} $c={9 + i} $last={r === 20} />))}
            <BottomEdge />
            <Selection />
            <QuickAnalysis>
              <Svg w={18} h={17}>
                <path d="M3.5 5V14.5H15.5V1.5H7" fill="#fff" stroke="#999" /><path d="M7 2H16" stroke="#888" strokeWidth="2" />
                <path d="M8 6H11" stroke={RED} strokeWidth="2" /><path d="M6 9H14" stroke={BLUE} strokeWidth="2" /><path d="M6 12H12" stroke={TEAL} strokeWidth="2" />
                <Smooth><path d="M3 0H7L5 4H7L1 11L3 6H1Z" fill={GOLD} /></Smooth>
              </Svg>
            </QuickAnalysis>
          </Sheet>
          <VScroll>
            <ScrollButton><Svg w={7} h={4} smooth><path d="M0 4L3.5 0L7 4Z" fill="#666" /></Svg></ScrollButton>
            <VThumb />
            <ScrollButton><Svg w={7} h={4} smooth><path d="M0 0L3.5 4L7 0Z" fill="#666" /></Svg></ScrollButton>
          </VScroll>
        </SheetArea>

        <SheetBar>
          <SheetNav>
            <Svg w={5} h={8} smooth><path d="M5 0V8L1 4Z" fill="#bdbdbd" /></Svg>
            <Svg w={5} h={8} smooth><path d="M1 0V8L5 4Z" fill="#bdbdbd" /></Svg>
          </SheetNav>
          <SheetTab>Sheet1</SheetTab>
          <AddSheet>
            <Svg w={17} h={17} smooth><circle cx="8.5" cy="8.5" r="7.5" stroke="#777" /><path d="M4.5 8.5H12.5M8.5 4.5V12.5" stroke="#666" strokeWidth="2" /></Svg>
          </AddSheet>
          <Dots $w={32} $h={27}><i /></Dots>
          <HScroll>
            <ScrollButton><Svg w={4} h={7} smooth><path d="M4 0V7L0 3.5Z" fill="#666" /></Svg></ScrollButton>
            <HThumb />
            <ScrollButton><Svg w={4} h={7} smooth><path d="M0 0V7L4 3.5Z" fill="#666" /></Svg></ScrollButton>
          </HScroll>
        </SheetBar>

        <StatusBar>
          <Ready>준비</Ready>
          <Stat $w={95}>평균: 718.16</Stat>
          <Stat $w={61}>개수: 24</Stat>
          <Stat $w={103}>합계: 17,235.92</Stat>
          <ViewButton $on><Svg w={13} h={13}><path d="M.5 .5H12.5V12.5H.5ZM4.5 0V13M8.5 0V13M0 4.5H13M0 8.5H13" stroke="#666" /></Svg></ViewButton>
          <ViewButton><Svg w={14} h={13}><path d="M.5 .5H13.5V12.5H.5ZM3.5 2.5H10.5V10.5H3.5ZM5 4.5H9M5 6.5H9M5 8.5H9" stroke="#666" /></Svg></ViewButton>
          <ViewButton><Svg w={14} h={13}><path d="M.5 .5H13.5V12.5H.5ZM4.5 0V7.5M8.5 0V7.5M1 7.5H9" stroke="#666" /></Svg></ViewButton>
          <ZoomControl>
            <Svg w={125} h={20}>
              <path d="M3 10H9" stroke="#666" strokeWidth="2" />
              <path d="M12 10.5H111" stroke="#adadad" />
              <rect x="60" y="4" width="5" height="12" fill="#666" />
              <path d="M114 10H122M118 6V14" stroke="#666" strokeWidth="2" />
            </Svg>
          </ZoomControl>
          <ZoomText>100%</ZoomText>
        </StatusBar>
        <TaskEdge />
        <MarkerBox />
      </Window>
    </>
  );
}

export default App;
